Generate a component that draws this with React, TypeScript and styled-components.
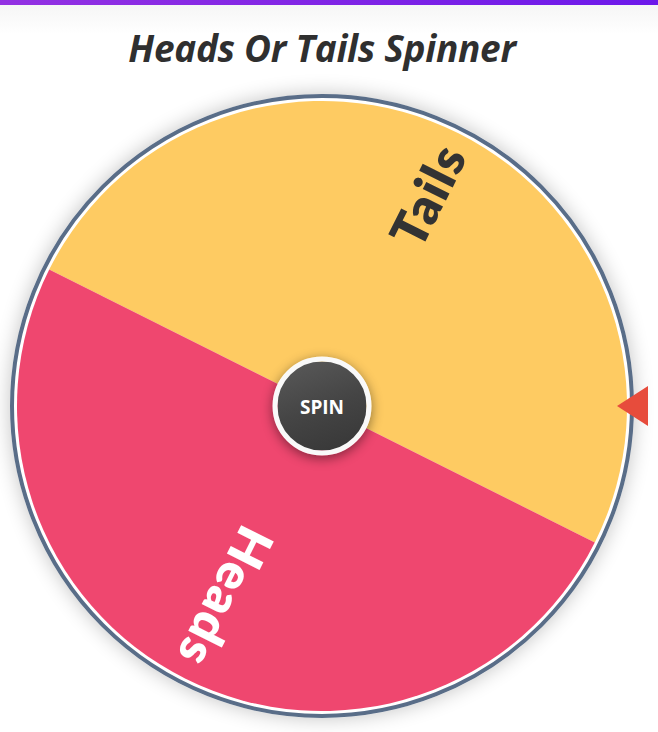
import styled, { createGlobalStyle } from "styled-components";

const GlobalStyle = createGlobalStyle`
  html, body {
    margin: 0;
    padding: 0;
    background: #ffffff;
  }
  body {
    font-family: "Open Sans", "Liberation Sans", sans-serif;
    overflow: hidden;
  }
`;

const SIZE = 624;
const C = SIZE / 2;
const R = 305;
// the divider between the two halves, in degrees (clockwise from 3 o'clock)
const SPLIT = 26.57;

const polar = (deg: number, r: number) => {
  const a = (deg * Math.PI) / 180;
  return [C + r * Math.cos(a), C + r * Math.sin(a)];
};

const segments = [
  { label: "Tails", from: SPLIT + 180, to: SPLIT + 360, fill: "#fecb62", text: "#333333", dist: 236 },
  { label: "Heads", from: SPLIT, to: SPLIT + 180, fill: "#ef476f", text: "#ffffff", dist: 214 },
];

export default function App() {
  return (
    <Page>
      <GlobalStyle />
      <TopBar />
      <Content>
        <Title>Heads Or Tails Spinner</Title>
        <WheelBox>
          <svg width={SIZE} height={SIZE} viewBox={`0 0 ${SIZE} ${SIZE}`}>
            <circle cx={C} cy={C} r={310} fill="#ffffff" stroke="#596d88" strokeWidth={4} />
            {segments.map((s) => {
              const [x1, y1] = polar(s.from, R);
              const [x2, y2] = polar(s.to, R);
              const mid = (s.from + s.to) / 2;
              return (
                <g key={s.label}>
                  <path d={`M ${C} ${C} L ${x1} ${y1} A ${R} ${R} 0 0 1 ${x2} ${y2} Z`} fill={s.fill} />
                  <WheelLabel
                    $color={s.text}
                    transform={`translate(${C} ${C}) rotate(${mid})`}
                    x={s.dist}
                    y={0}
                    textAnchor="middle"
                    dominantBaseline="central"
                  >
                    {s.label}
                  </WheelLabel>
                </g>
              );
            })}
          </svg>
          <SpinButton>SPIN</SpinButton>
          <Pointer />
        </WheelBox>
      </Content>
    </Page>
  );
}

const Page = styled.div`
  width: 100%;
  min-height: 732px;
  background: linear-gradient(180deg, #f4f4f4 0px, #ffffff 34px);
`;

const TopBar = styled.div`
  height: 5px;
  background: linear-gradient(90deg, #9331e2 0%, #7c22e6 60%, #6c18ea 100%);
`;

const Content = styled.div`
  width: 644px;
  display: flex;
  flex-direction: column;
  align-items: center;
`;

const Title = styled.h1`
  margin: 20px 0 0;
  font-family: "Open Sans", "Liberation Sans", sans-serif;
  font-style: italic;
  font-weight: 700;
  font-size: 37px;
  line-height: 46px;
  letter-spacing: -0.3px;
  color: #2f2f2f;
`;

const WheelBox = styled.div`
  position: relative;
  width: ${SIZE}px;
  height: ${SIZE}px;
  margin-top: 23px;
  border-radius: 50%;
  box-shadow: 0 0 20px rgba(0, 0, 0, 0.24);

  svg {
    display: block;
  }
`;

const WheelLabel = styled.text<{ $color: string }>`
  font-family: "Lato", "DejaVu Sans", sans-serif;
  font-weight: 800;
  font-size: 50px;
  letter-spacing: 1.5px;
  fill: ${(p) => p.$color};
`;

const SpinButton = styled.button`
  position: absolute;
  left: 50%;
  top: 50%;
  width: 99px;
  height: 99px;
  transform: translate(-50%, -50%);
  border: 5px solid #f9f9f9;
  border-radius: 50%;
  background: linear-gradient(160deg, #5a5a5a 0%, #454545 50%, #363636 100%);
  box-shadow: 0 3px 12px rgba(0, 0, 0, 0.45);
  color: #ffffff;
  font-family: "Open Sans", "Liberation Sans", sans-serif;
  font-weight: 700;
  font-size: 19px;
  cursor: pointer;
  padding: 0;
`;

const Pointer = styled.div`
  position: absolute;
  left: 607px;
  top: ${C - 20}px;
  width: 0;
  height: 0;
  border-top: 20px solid transparent;
  border-bottom: 20px solid transparent;
  border-right: 31px solid #e74c3c;
`;
